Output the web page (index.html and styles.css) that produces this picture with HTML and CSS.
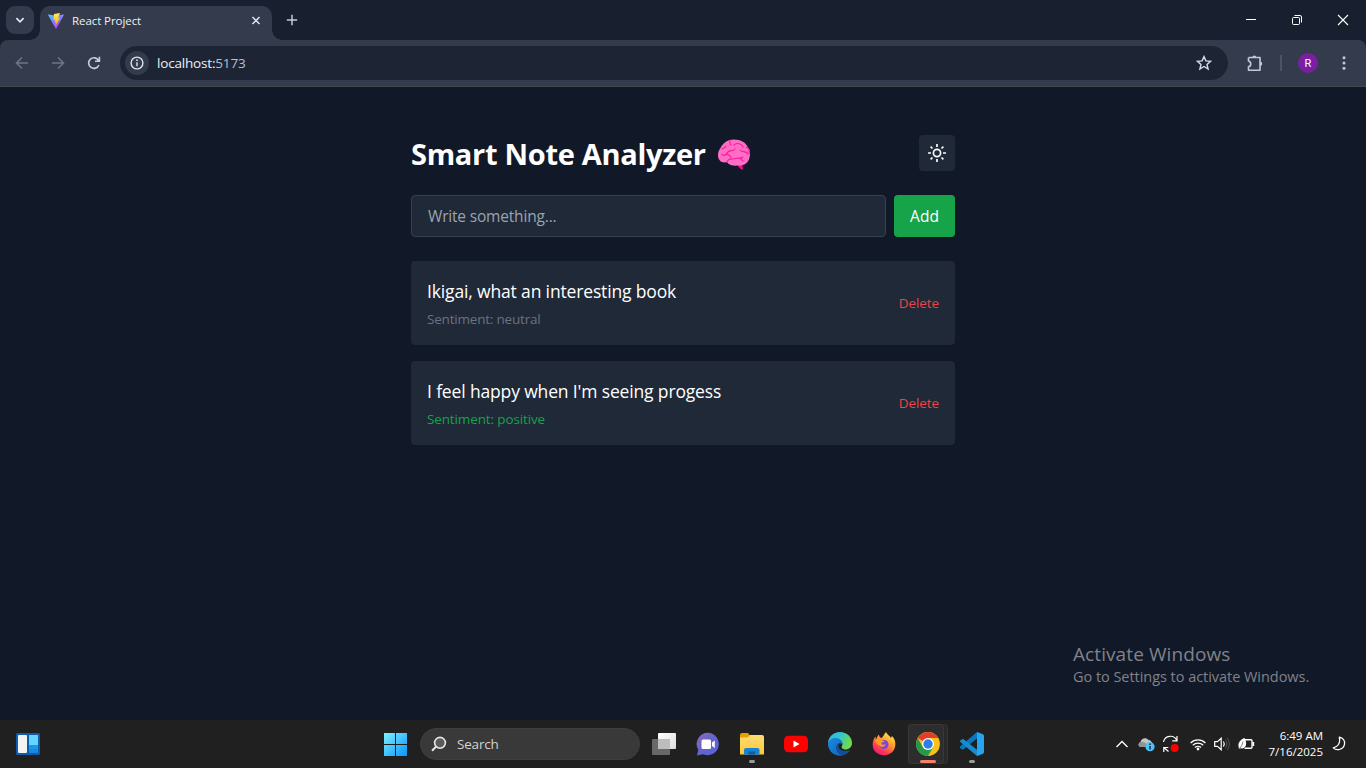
FILE: index.html
```html
<!DOCTYPE html>
<html lang="en">
<head>
<meta charset="utf-8">
<title>React Project</title>
<link rel="stylesheet" href="styles.css">
</head>
<body>
<div class="desktop">
  <header class="tabstrip">
    <div class="tab-search"><svg width="12" height="12" viewBox="0 0 12 12"><path d="M2.400 4.200 6 7.800 9.600 4.200" fill="none" stroke="#e4e7ee" stroke-width="1.700"/></svg></div>
    <div class="tab">
      <svg width="16" height="16" viewBox="0 0 16 16">
        <defs><linearGradient id="va" x1="0" y1="0" x2=".6" y2="1"><stop offset="0" stop-color="#41d1ff"/><stop offset="1" stop-color="#bd34fe"/></linearGradient><linearGradient id="vb" x1="0" y1="0" x2="0" y2="1"><stop offset="0" stop-color="#ffea83"/><stop offset=".3" stop-color="#ffdd35"/><stop offset="1" stop-color="#ffa800"/></linearGradient></defs>
        <path d="M15.900 2 8.400 15.500c-.2.300-.6.300-.8 0L.1 2c-.2-.3.100-.7.500-.6L8 2.700l7.400-1.300c.4-.1.700.3.500.6z" fill="url(#va)"/>
        <path d="M12 0 6 1.100l-.6 6 1.900-.3-.5 2.600 1.300-.2-.8 3.800 4.700-8-2 .3.800-2z" fill="url(#vb)"/>
      </svg>
      <span class="tab-title">React Project</span>
      <svg class="tab-close" width="10" height="10" viewBox="0 0 10 10"><path d="M1.500 1 8.500 8M8.500 1 1.500 8" stroke="#e4e7ee" stroke-width="1.500"/></svg>
    </div>
    <svg class="new-tab" width="12" height="12" viewBox="0 0 12 12"><path d="M6 .8v10.400M.8 6h10.400" stroke="#c3c9d9" stroke-width="1.500"/></svg>
    <div class="window-controls">
      <svg width="46" height="40"><path d="M18 19.500h10" stroke="#fff"/></svg>
      <svg width="46" height="40" fill="none" stroke="#fff"><rect x="18.500" y="17.500" width="7" height="7" rx="1"/><path d="M20.500 15.500h5.500q1.500 0 1.500 1.500v5.500"/></svg>
      <svg width="46" height="40"><path d="m18 15 10 10m0-10L18 25" stroke="#fff" stroke-width="1.100"/></svg>
    </div>
  </header>

  <nav class="toolbar">
    <svg class="nav-icon off" viewBox="0 0 16 16"><path d="M14 8H3M8 2.500 2.500 8 8 13.500"/></svg>
    <svg class="nav-icon off" viewBox="0 0 16 16"><path d="M2 8h11M8 2.500 13.500 8 8 13.500"/></svg>
    <svg class="nav-icon" viewBox="0 0 16 16"><path d="M12.900 10A5.300 5.300 0 1 1 12.600 5.500M13.400 1.800v4.400H9"/></svg>
    <div class="address">
      <div class="site-info"><svg width="14" height="14" viewBox="0 0 14 14"><circle cx="7" cy="7" r="5.900" fill="none" stroke="#dfe3ec" stroke-width="1.400"/><path d="M7 6.200v4" stroke="#dfe3ec" stroke-width="1.400"/><circle cx="7" cy="4.200" r=".9" fill="#dfe3ec"/></svg></div>
      <span class="url">localhost:<i>5173</i></span>
      <svg class="star" width="16" height="16" viewBox="0 0 16 16"><path d="m8 1.600 1.900 4.300 4.700.4-3.600 3.100 1.100 4.600L8 11.500l-4.100 2.500L5 9.400 1.400 6.300l4.700-.4z" fill="none" stroke="#d8dce6" stroke-width="1.400"/></svg>
    </div>
    <svg class="puzzle" width="18" height="18" viewBox="0 0 18 18"><path d="M2.500 3.500H14v12.800H2.500v-4M2.500 7.500v-4" fill="none" stroke="#c3c9d9" stroke-width="1.600" stroke-linejoin="round"/><path d="M2.500 7.300c3 .3 3 5 0 5.200" fill="none" stroke="#c3c9d9" stroke-width="1.600"/><path d="M6.300 3.500a2 2 0 0 1 4 0zM14 7.500a2 2 0 0 1 0 4.400z" fill="#c3c9d9"/></svg>
    <span class="divider"></span>
    <span class="avatar">R</span>
    <svg class="kebab" width="4" height="16" viewBox="0 0 4 16" fill="#c3c9d9"><circle cx="2" cy="2.700" r="1.500"/><circle cx="2" cy="8" r="1.500"/><circle cx="2" cy="13.300" r="1.500"/></svg>
  </nav>

  <main class="page">
    <section class="app">
      <div class="app-head">
        <h1><span>Smart Note Analyzer</span>
          <svg width="34" height="34" viewBox="0 0 34 34"><path d="M20 25c2 0 3 2.500 5.500 2.500L26 32c-3-1-5-3-6-6z" fill="#f70a8d"/><path d="M2.500 22C0 19 .8 13 3.500 10 6 5 11 1.600 17 1.600c7 0 12 3 14 8 2.600 4 2.500 9 .5 13-2 4-6 5.400-10 5-4 .2-9 .4-11.500-3.300-3 .4-6 .2-7.500-2.300z" fill="#ff6dc4"/><path d="M5 11c2-1 3-1 4-3m4-5c0 2-1 2 1 4m3 0c3-3 8-1 9 2m-8 2c-2 3-6 0-8 4-1 3-4 3-5 1m5 0c2 1 4 2 4 4m9-8c2 3 6 0 8 4m-2-7c3 1 4 3 3 6M16 21c4-2 6 1 10-2m-3 1 3 3M10 24c1-3 3-3 5-3" fill="none" stroke="#f51b9b" stroke-width="1.100" stroke-linecap="round"/></svg>
        </h1>
        <button class="theme" aria-label="Toggle theme"><svg width="20" height="20" viewBox="0 0 20 20" fill="none" stroke="#f9fafb" stroke-width="1.700"><circle cx="10" cy="10" r="3.600"/><path d="M10 1v3M10 16v3M1 10h3M16 10h3M3.600 3.600l1.900 1.900M14.500 14.500l1.900 1.900M3.600 16.400l1.900-1.900M14.500 5.500l1.900-1.900"/></svg></button>
      </div>
      <div class="entry"><div class="field">Write something...</div><button class="add">Add</button></div>
      <article class="note"><div><p class="text">Ikigai, what an interesting book</p><p class="sent">Sentiment: neutral</p></div><button class="delete">Delete</button></article>
      <article class="note"><div><p class="text">I feel happy when I'm seeing progess</p><p class="sent positive">Sentiment: positive</p></div><button class="delete">Delete</button></article>
    </section>
    <aside class="watermark"><p class="wm-title">Activate Windows</p><p class="wm-sub">Go to Settings to activate Windows.</p></aside>
  </main>

  <footer class="taskbar">
    <svg class="widgets" width="24" height="22" viewBox="0 0 24 22"><rect width="24" height="22" rx="1.500" fill="#0f5cad"/><rect x="2" y="2" width="9" height="18" rx="1" fill="#f3f3f3"/><rect x="13" y="2" width="9" height="18" rx="1" fill="#1f86e0"/><path d="M13 2h9v10h-9z" fill="#67d4ff"/><path d="M13 12h9v4h-9z" fill="#139af0"/></svg>
    <div class="apps">
      <svg class="start" width="23" height="23" viewBox="0 0 23 23"><defs><linearGradient id="w" gradientUnits="userSpaceOnUse" x1="0" y1="0" x2="23" y2="23"><stop stop-color="#7cf0ff"/><stop offset="1" stop-color="#0a93fb"/></linearGradient></defs><path d="M0 0h11v11H0zM12 0h11v11H12zM0 12h11v11H0zM12 12h11v11H12z" fill="url(#w)"/></svg>
      <div class="search"><svg width="16" height="16" viewBox="0 0 16 16"><circle cx="9" cy="6.800" r="5.400" fill="#5b5b5b" stroke="#e6e6e6" stroke-width="1.600"/><path d="m5 10.800-4 4" stroke="#e6e6e6" stroke-width="2"/></svg><span>Search</span></div>
      <div class="launch">
        <span class="slot"><svg viewBox="0 0 24 24"><defs><linearGradient id="tv" x1="0" y1="0" x2="1" y2="1"><stop stop-color="#fff"/><stop offset="1" stop-color="#ddd"/></linearGradient></defs><rect x="6" y="1" width="18" height="16" rx="1" fill="url(#tv)"/><rect x="0" y="7" width="18" height="16" rx="1" fill="#707070" opacity=".9"/><path d="M6 7h12v10H6z" fill="#bdbdbd"/></svg></span>
        <span class="slot"><svg viewBox="0 0 24 24"><defs><linearGradient id="mt" x1="0" y1="0" x2="1" y2="1"><stop stop-color="#9666b6"/><stop offset=".5" stop-color="#6264cb"/><stop offset="1" stop-color="#5b63dc"/></linearGradient></defs><path d="M12 .8A11.200 11.200 0 1 1 7 22.200L1 23.400l1.300-5.600A11.200 11.200 0 0 1 12 .8z" fill="url(#mt)"/><rect x="5.500" y="7.500" width="9.500" height="9.500" rx="1.500" fill="#fff"/><path d="m16 10.500 2.800-2v7.500L16 14z" fill="#fff"/></svg></span>
        <span class="slot open"><svg viewBox="0 0 24 24"><defs><linearGradient id="fo" x1="0" y1="0" x2="0" y2="1"><stop stop-color="#ffdc75"/><stop offset="1" stop-color="#ffc636"/></linearGradient></defs><path d="M0 3q0-2 2-2h6l2 2.500L8 7H0z" fill="#e6a000"/><path d="M0 5.500h7.500L10 3h12q2 0 2 2v17.500H0z" fill="url(#fo)"/><path d="M4 22.500V18q0-2 2-2h11.500q2 0 2 2v4.500z" fill="#1583d5"/><path d="M8.500 19.500H15v3H8.500z" fill="#0d5ca5"/></svg></span>
        <span class="slot"><svg viewBox="0 0 24 24"><rect y="3.800" width="24" height="16.500" rx="4.500" fill="#f00"/><path d="m9.500 8.500 6 3.500-6 3.500z" fill="#fff"/></svg></span>
        <span class="slot"><svg viewBox="0 0 24 24"><defs><linearGradient id="e1" x1="0" y1="0" x2="1" y2=".4"><stop stop-color="#2eb9ee"/><stop offset=".5" stop-color="#33c5cf"/><stop offset="1" stop-color="#70dc47"/></linearGradient><linearGradient id="e2" x1="0" y1="0" x2="1" y2="1"><stop stop-color="#1b8be0"/><stop offset="1" stop-color="#0d62b7"/></linearGradient></defs><path d="M0 12C0 5 5 0 12 0s12 5 12 11c0 4-3 6.500-6.500 6.500S13 15 14 14c2-4-2-7-6-7-4 0-7 2-8 5z" fill="url(#e1)"/><path d="M0 12c1-5 5-6.500 8.500-6 4 .5 6 3.500 5.500 6-3-2-6 1-5.500 4.500.5 3.500 4 6.500 8.500 6.300C8 26 0 20 0 12z" fill="url(#e2)"/><path d="M8.500 14c-1 6 5 9.500 9 8.500 2-1 4-3 5-5-2 1.400-9 3-11.500-1.500-.8-1.500-.6-3 .5-4-1.500 0-2.700.7-3 2z" fill="#124f9c"/></svg></span>
        <span class="slot"><svg viewBox="0 0 24 24"><defs><linearGradient id="ff" x1=".8" y1="0" x2=".2" y2="1"><stop stop-color="#fff044"/><stop offset=".4" stop-color="#ff9a2e"/><stop offset=".75" stop-color="#ff3750"/><stop offset="1" stop-color="#e31587"/></linearGradient></defs><path d="M14 0c1 3 4 3.500 5 6l1-2c3 3 3.500 6 3.300 9C23 19 18 23.300 12 23.300S.7 19 .7 13c0-4 1-6 2.600-8.500l.7 3C5 6 5 4 7 2.500c0 2 .8 3 2.500 3.500C11 5 12 2 14 0z" fill="url(#ff)"/><circle cx="12" cy="12.500" r="4.500" fill="#7b48db"/><path d="M3.500 7.500c3-1 5 .2 6.500 1 1 .4 2 .3 2.500.5-.3 1.500-3 1.300-3.200 2.500.7 1.500 3 1.400 4.500.8-1 3-5 3.400-6.500 1C5 13 3.500 11 3.500 7.500z" fill="#ff981f"/></svg></span>
        <span class="slot active"><svg viewBox="0 0 24 24"><circle cx="12" cy="12" r="11.900" fill="#fbc116"/><path d="M12 12 1.700 6A11.900 11.900 0 0 1 22.300 6H12z" fill="#e33b2e"/><path d="M1.700 6a11.900 11.900 0 0 0 10.300 17.900L17.200 15 12 12 6.800 15z" fill="#269947"/><circle cx="12" cy="12" r="6" fill="#fff"/><circle cx="12" cy="12" r="4.700" fill="#2f7de9"/></svg></span>
        <span class="slot open"><svg viewBox="0 0 24 24"><path d="M17 0v6.500L3 17.800 0 16.200v-1.600z" fill="#0877bd"/><path d="m0 8.800 3-2 14 11V24L0 9.800z" fill="#168bd2"/><path d="m17 0 5.500 2Q24 2.500 24 4v16q0 1.500-1.500 2L17 24z" fill="#24a5f2"/></svg></span>
      </div>
    </div>
    <div class="tray">
      <svg width="12" height="8" viewBox="0 0 12 8"><path d="m.5 7 5.500-5.500L11.500 7" fill="none" stroke="#fff" stroke-width="1.300"/></svg>
      <svg class="cloud" width="17" height="16" viewBox="0 0 17 16"><path d="M3 11C0 11-.3 7 2.500 6.300 3 2.500 8 .8 10.500 4c3 0 4 3 3 7z" fill="#c4c4c4"/><path d="M4 6c3 0 5 2 8 5H3C0 11-.3 7 2.500 6.300z" fill="#929292"/><circle cx="12" cy="10.700" r="4.600" fill="#4ec2fc"/><path d="M12 10v3.500M12 7.600v1.300" stroke="#123" stroke-width="1.400"/></svg>
      <svg class="sync" width="17" height="18" viewBox="0 0 17 18"><path d="M1.500 7A7 7 0 0 1 14.800 5.500M15 1v4.800h-4.800M1.800 17v-4.500H6.300M1.800 12.500 6.500 16.500" fill="none" stroke="#fff" stroke-width="1.200"/><circle cx="12.700" cy="13" r="4" fill="#f00"/></svg>
      <svg class="wifi" width="16" height="13" viewBox="0 0 16 13"><g fill="none" stroke="#fff" stroke-width="1.200"><path d="M.6 5a10.500 10.500 0 0 1 14.800 0M2.800 7.300a7.400 7.400 0 0 1 10.400 0M5 9.500a4.300 4.300 0 0 1 6 0"/></g><circle cx="8" cy="11" r="1.400" fill="#fff"/></svg>
      <svg class="vol" width="16" height="14" viewBox="0 0 16 14"><path d="M.7 4.700h2.800l3.700-3.500v11.600L3.500 9.300H.7zM9.300 4.500q1.800 2.500 0 5" fill="none" stroke="#fff" stroke-width="1.200"/><path d="M11.300 2.800q3.200 4.200 0 8.400M13.200 1q4.400 6 0 12" fill="none" stroke="#555"/></svg>
      <svg class="battery" width="17" height="12" viewBox="0 0 17 12"><path d="M7 1.700h6q1 0 1 1v6.600q0 1-1 1H6.500" fill="none" stroke="#fff" stroke-width="1.400"/><path d="M14.500 4h1.700v4h-1.700z" fill="#fff"/><path d="M1 10.500C-.8 5 2 2 6.500 0 9 4 9 10 4 10.500L1.500 10.300.3 12z" fill="#fff"/><path d="M5 3.500Q4.700 7 2 10" fill="none" stroke="#666" stroke-width=".8"/></svg>
      <div class="clock"><p>6:49 AM</p><p>7/16/2025</p></div>
      <svg class="moon" width="14" height="16" viewBox="0 0 14 16"><path d="M7.300 1.200c4 .6 5.700 3.600 5.200 6.900-.7 5-7.500 7.500-11.300 3.800 4.500-.8 7.600-4.700 6.100-10.700z" fill="none" stroke="#fff" stroke-width="1.200" stroke-linejoin="round"/></svg>
    </div>
  </footer>
</div>
</body>
</html>
```
FILE: styles.css
```css
* { box-sizing: border-box; }
body, h1, p { margin: 0; }
body { font-family: "Open Sans", "Noto Sans", sans-serif; color: #fff; overflow: hidden; }
button { font: inherit; border: 0; padding: 0; }
svg { display: block; flex: none; }
.desktop { width: 1366px; height: 768px; display: grid; grid-template: 40px 47px 633px 48px / 1366px; background: #18202f; white-space: nowrap; }

.tabstrip { display: flex; background: #18202f; }
.tab-search { width: 28px; height: 28px; margin: 6px; border-radius: 9px; background: #333b4c; display: grid; place-items: center; }
.tab { position: relative; width: 232px; height: 34px; margin-top: 6px; padding: 0 11px 5px 8px; display: flex; align-items: center; background: #333b4c; border-radius: 10px 10px 0 0; }
.tab::before, .tab::after { content: ""; position: absolute; bottom: 0; width: 10px; height: 10px; }
.tab::before { left: -10px; background: radial-gradient(circle at 0 0, transparent 9.5px, #333b4c 10px); }
.tab::after { right: -10px; background: radial-gradient(circle at 100% 0, transparent 9.5px, #333b4c 10px); }
.tab-title { margin-left: 8px; font-size: 11.5px; letter-spacing: -0.07px; color: #edf0f5; }
.tab-close { margin-left: auto; }
.new-tab { margin: 14px 0 0 14px; }
.window-controls { display: flex; margin-left: auto; }

.toolbar { display: flex; align-items: center; padding: 0 20px 1px 14px; background: #333b4c; border-bottom: 1px solid #46474b; border-radius: 8px 8px 0 0; }
.nav-icon { flex: none; width: 16px; height: 16px; margin-right: 20px; fill: none; stroke: #c8cede; stroke-width: 1.6; }
.nav-icon.off { stroke: #6d7585; }
.address { display: flex; flex: none; align-items: center; width: 1108px; height: 34px; margin-left: -2px; padding: 0 16px 0 5px; border-radius: 17px; background: #1d2535; }
.site-info { width: 24px; height: 24px; border-radius: 50%; background: #333b4c; display: grid; place-items: center; }
.url { margin-left: 8px; font-size: 13.5px; letter-spacing: -0.18px; color: #edf0f5; }
.url i { font-style: normal; color: #b9bfcc; }
.star { margin-left: auto; }
.puzzle { margin-left: 18px; }
.divider { flex: none; width: 2px; height: 16px; margin: 0 16px; background: #4b5365; }
.avatar { flex: none; width: 20px; height: 20px; border-radius: 50%; background: #7b1fa2; font: 11px/21px Roboto, sans-serif; text-align: center; }
.kebab { margin-left: 24px; }

.page { position: relative; background: #111827; }
.app { width: 544px; margin: 0 auto; padding-top: 48px; }
.app-head { display: flex; justify-content: space-between; align-items: center; height: 36px; margin-bottom: 24px; }
h1 { display: flex; align-items: center; gap: 11px; font-size: 29px; font-weight: 700; line-height: 36px; letter-spacing: -0.3px; padding-top: 1px; }
h1 svg { margin-top: 2px; }
.theme { width: 36px; height: 36px; display: grid; place-items: center; border-radius: 4px; background: #1f2937; }
.entry { display: flex; gap: 8px; height: 42px; margin-bottom: 24px; }
.field { flex: 1; padding: 0 16px; border: 1px solid #374151; border-radius: 4px; background: #1f2937; color: #9ca3af; font-size: 15.5px; line-height: 41px; letter-spacing: -0.18px; }
.add { width: 61px; border-radius: 4px; background: #16a34a; color: #fff; font-size: 15.5px; line-height: 42px; }
.note { display: flex; justify-content: space-between; align-items: center; height: 84px; margin-bottom: 16px; padding: 0 16px; border-radius: 4px; background: #1f2937; box-shadow: 0 1px 2px rgb(0 0 0 / 5%); }
.text { font-size: 17.5px; line-height: 28px; letter-spacing: -0.15px; }
.sent { font-size: 13.5px; line-height: 20px; margin-top: 4px; letter-spacing: -0.2px; color: #6b7280; }
.positive { color: #16a34a; letter-spacing: -0.13px; }
.delete { background: none; color: #ef4444; font-size: 13.5px; letter-spacing: -0.1px; }
.watermark { position: absolute; left: 1073px; top: 554px; color: #808389; }
.wm-title { font-size: 19px; line-height: 26px; letter-spacing: 0.09px; }
.wm-sub { font-size: 14.5px; line-height: 20px; letter-spacing: -0.04px; }

.taskbar { display: grid; grid-template-columns: 384px 1fr auto; align-items: center; background: #202020; }
.widgets { margin-left: 16px; }
.apps { display: flex; align-items: center; }
.search { display: flex; align-items: center; gap: 10px; width: 220px; height: 32px; margin-left: 13px; padding-left: 10px; border-radius: 16px; background: #393939; border: 1px solid #3f3f3f; color: #d2d2d2; font-size: 13.5px; letter-spacing: -0.2px; }
.launch { display: flex; gap: 4px; margin-left: 4px; }
.slot { position: relative; width: 40px; height: 40px; display: grid; place-items: center; }
.slot svg { width: 24px; height: 24px; }
.slot.open::after, .slot.active::after { content: ""; position: absolute; left: 17px; bottom: 1px; width: 6px; height: 3px; border-radius: 2px; background: #9b9b9b; }
.slot.active { width: 36px; margin-right: 4px; padding-left: 4px; background: #2d2d2d; border-radius: 4px; box-shadow: 0 0 0 1px #383838 inset, 3px 0 #292929, 4px 0 #353535; }
.slot.active::after { left: 12px; width: 16px; background: #f5816b; }
.tray { display: flex; align-items: center; padding-right: 20px; }
.cloud { margin-left: 10px; }
.sync { margin-left: 7px; }
.wifi { margin-left: 11px; }
.vol { margin-left: 8px; }
.battery { margin-left: 8px; }
.clock { width: 68px; text-align: right; font-size: 11.5px; line-height: 16px; }
.moon { margin-left: 9px; }
```
